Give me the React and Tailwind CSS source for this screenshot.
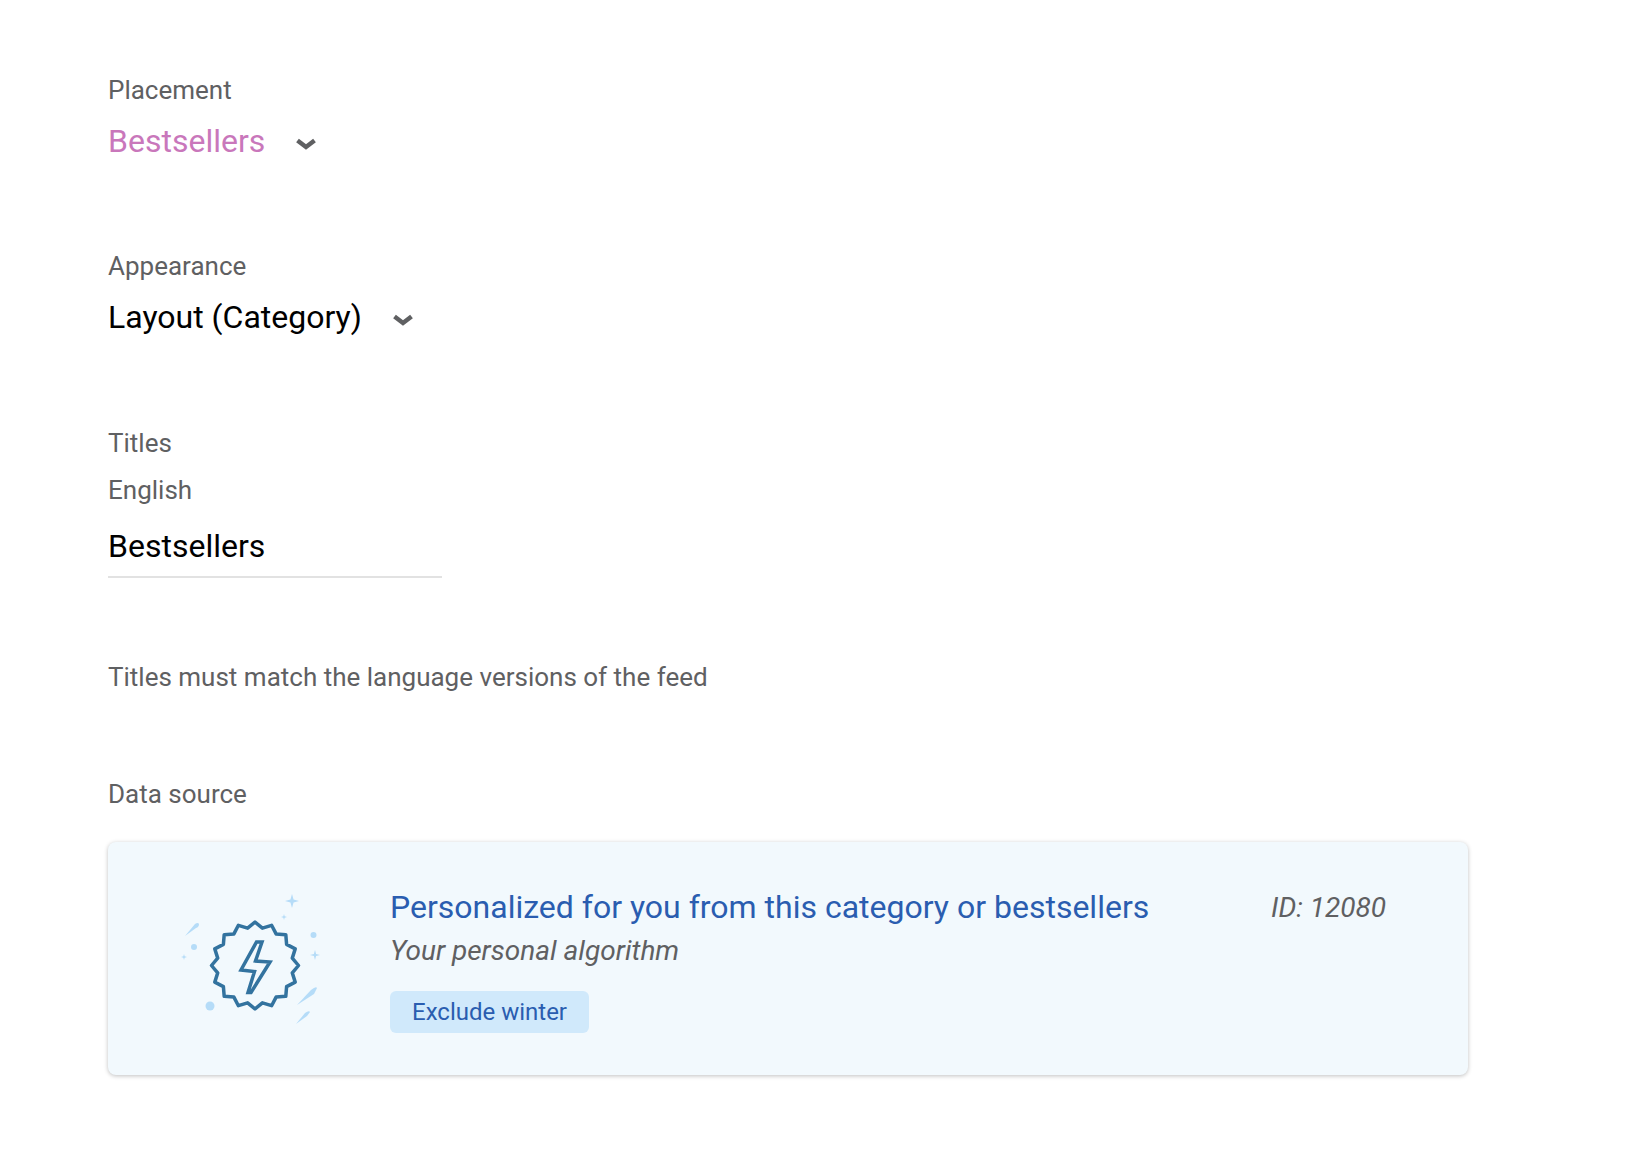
const font = { fontFamily: "Roboto, sans-serif" };

// wavy seal outline around the bolt
function sealPoints() {
  const pts = [];
  for (let i = 0; i < 32; i++) {
    const r = i % 2 === 0 ? 43.5 : 38;
    const a = (i / 32) * Math.PI * 2 - Math.PI / 2;
    pts.push(`${(95 + r * Math.cos(a)).toFixed(1)},${(83.5 + r * Math.sin(a)).toFixed(1)}`);
  }
  return pts.join(" ");
}

function Sparkle({ x, y, r, fill = "#b5dcf8" }) {
  const k = r * 0.22;
  return (
    <polygon
      fill={fill}
      points={`${x},${y - r} ${x + k},${y - k} ${x + r},${y} ${x + k},${y + k} ${x},${y + r} ${x - k},${y + k} ${x - r},${y} ${x - k},${y - k}`}
    />
  );
}

function BurstIcon() {
  return (
    <svg viewBox="0 0 200 160" className="h-[160px] w-[200px] shrink-0" fill="none">
      <polygon points={sealPoints()} stroke="#33739f" strokeWidth="3.5" strokeLinejoin="round" />
      <polygon
        points="96.5,60 102,60 95.5,79 110,80 91,110.5 88,110.5 94.5,89.5 81,88"
        stroke="#33739f"
        strokeWidth="3.5"
        strokeLinejoin="miter"
      />
      <Sparkle x={132} y={19} r={7} />
      <Sparkle x={124} y={35} r={3} />
      <Sparkle x={155} y={73} r={5} />
      <Sparkle x={24} y={75} r={3} />
      <circle cx={153.5} cy={53} r={3} fill="#b5dcf8" />
      <circle cx={34} cy={65} r={3} fill="#b5dcf8" />
      <circle cx={50} cy={124} r={4.5} fill="#b5dcf8" />
      <path d="M25 54 L35 42 Q38 40 39 42 Q39 45 36 46 Z" fill="#b5dcf8" />
      <path d="M137 123 L151 108 Q156 104 157 106 L154 112 Z" fill="#b5dcf8" />
      <path d="M136 142 L145 131 Q149 128 150 130 L147 134 Z" fill="#b5dcf8" />
    </svg>
  );
}

function Label({ children, className = "" }) {
  return <div className={`text-[26px] leading-[32px] text-[#5f6062] ${className}`}>{children}</div>;
}

function Dropdown({ value, color }) {
  return (
    <div className={`mt-[11px] flex h-[48px] items-center text-[32px] ${color}`}>
      <span>{value}</span>
      <svg viewBox="0 0 20 14" className="ml-[31px] mt-[6px] h-[14px] w-[20px]" fill="none">
        <path d="M1.5 3.5 L10 10 L18.5 3.5" stroke="#5f6062" strokeWidth="4.5" />
      </svg>
    </div>
  );
}

export default function App() {
  return (
    <div className="min-h-[1174px] bg-white pl-[108px] pt-[74px]" style={font}>
      <Label>Placement</Label>
      <Dropdown value="Bestsellers" color="text-[#c977bb]" />

      <Label className="mt-[85px]">Appearance</Label>
      <Dropdown value="Layout (Category)" color="text-black" />

      <Label className="mt-[86px]">Titles</Label>
      <Label className="mt-[15px]">English</Label>
      <div className="mt-[16px] h-[56px] w-[334px] border-b-2 border-[#e2e2e2] text-[32px] leading-[48px] text-black">
        Bestsellers
      </div>
      <Label className="mt-[83px]">Titles must match the language versions of the feed</Label>

      <Label className="mt-[85px]">Data source</Label>
      <div className="mt-[32px] flex h-[233px] w-[1360px] rounded-lg bg-[#f2f9fd] pl-[52px] pt-[40px] shadow-[0_1px_4px_rgba(0,0,0,0.25)]">
        <BurstIcon />
        <div className="ml-[30px] w-[881px]">
          <div className="mt-[1px] text-[32px] leading-[48px] text-[#2a5db0]">
            Personalized for you from this category or bestsellers
          </div>
          <div className="mt-[-1px] text-[28px] leading-[42px] italic text-[#5f6062]">Your personal algorithm</div>
          <div className="mt-[19px] inline-block rounded-md bg-[#d0e9fb] px-[22px] text-[24px] leading-[42px] text-[#2a5db0]">
            Exclude winter
          </div>
        </div>
        <div className="mt-[2px] text-[28px] leading-[48px] italic text-[#5f6062]">ID: 12080</div>
      </div>
    </div>
  );
}
